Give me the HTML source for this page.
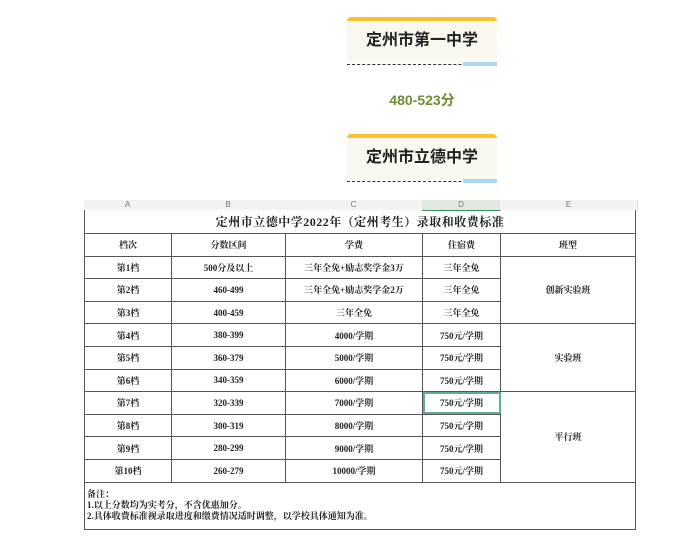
<!DOCTYPE html><html><head><meta charset="utf-8"><style>
body{margin:0;width:700px;height:547px;background:#fff;position:relative;overflow:hidden;font-family:"Liberation Sans","Noto Sans CJK SC",sans-serif}
.card{position:absolute;left:347px;width:150px;height:42px;background:#fbf8ef;border-top:4px solid #f9c22e;border-radius:4px 4px 0 0;text-align:center;font-size:16px;line-height:40px;color:#222;font-weight:bold}
.card .dash{position:absolute;left:0;right:0;bottom:-2px;border-bottom:1px dashed #333}
.card .blue{position:absolute;right:0;bottom:-3px;width:34px;height:4px;background:#aad7f7}
.score{position:absolute;left:347px;width:150px;top:90px;text-align:center;color:#6f8a32;font-weight:bold;font-size:14px}
.sheet{position:absolute;left:84px;top:200px;width:553px;height:337px;background:#fff}
.colh{position:absolute;top:0;height:10px;background:#f2f2f2;font-size:8px;line-height:10px;text-align:center;color:#777;border-right:1px solid #ddd}
table{position:absolute;left:0;top:10px;border-collapse:collapse;font-family:"Liberation Serif","Noto Serif CJK SC",serif;font-size:9px;color:#222;table-layout:fixed;font-weight:bold}
td{border:1px solid #555;text-align:center;padding:0;height:21.6px}
.title{font-size:12px;height:23px;border-top:none;letter-spacing:0.5px}
.note{text-align:left;font-size:9px;line-height:11px;vertical-align:top;padding:6px 2px}
</style></head><body>
<div class="card" style="top:17px">定州市第一中学<div class="dash"></div><div class="blue"></div></div>
<div class="score">480-523分</div>
<div class="card" style="top:134px">定州市立德中学<div class="dash"></div><div class="blue"></div></div>
<div class="sheet">
<div class="colh" style="left:0;width:87px">A</div>
<div class="colh" style="left:87px;width:114px">B</div>
<div class="colh" style="left:201px;width:137px">C</div>
<div class="colh" style="left:338px;width:78px;background:#dfe9e0;border-bottom:1px solid #3a8a5a">D</div>
<div class="colh" style="left:416px;width:137px">E</div>
<table>
<colgroup><col style="width:87px"><col style="width:114px"><col style="width:137px"><col style="width:78px"><col style="width:135px"></colgroup>
<tr><td colspan="5" class="title">定州市立德中学2022年（定州考生）录取和收费标准</td></tr>
<tr><td>档次</td><td>分数区间</td><td>学费</td><td>住宿费</td><td>班型</td></tr>
<tr><td>第1档</td><td>500分及以上</td><td>三年全免+励志奖学金3万</td><td>三年全免</td><td rowspan="3">创新实验班</td></tr>
<tr><td>第2档</td><td>460-499</td><td>三年全免+励志奖学金2万</td><td>三年全免</td></tr>
<tr><td>第3档</td><td>400-459</td><td>三年全免</td><td>三年全免</td></tr>
<tr><td>第4档</td><td>380-399</td><td>4000/学期</td><td>750元/学期</td><td rowspan="3">实验班</td></tr>
<tr><td>第5档</td><td>360-379</td><td>5000/学期</td><td>750元/学期</td></tr>
<tr><td>第6档</td><td>340-359</td><td>6000/学期</td><td>750元/学期</td></tr>
<tr><td>第7档</td><td>320-339</td><td>7000/学期</td><td style="outline:2px solid #5fae8c;outline-offset:-2px">750元/学期</td><td rowspan="4">平行班</td></tr>
<tr><td>第8档</td><td>300-319</td><td>8000/学期</td><td>750元/学期</td></tr>
<tr><td>第9档</td><td>280-299</td><td>9000/学期</td><td>750元/学期</td></tr>
<tr><td>第10档</td><td>260-279</td><td>10000/学期</td><td>750元/学期</td></tr>
<tr><td colspan="5" class="note" style="height:34px">备注：<br>1.以上分数均为实考分，不含优惠加分。<br>2.具体收费标准视录取进度和缴费情况适时调整，以学校具体通知为准。</td></tr>
</table>
</div>
</body></html>
